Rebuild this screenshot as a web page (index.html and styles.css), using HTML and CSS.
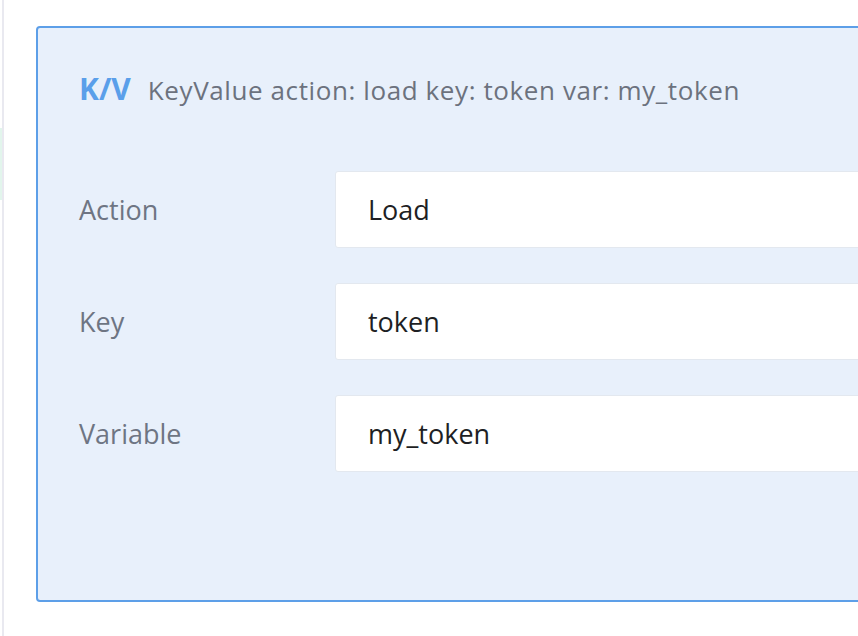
FILE: index.html
```html
<!DOCTYPE html>
<html>
<head>
<meta charset="utf-8">
<link rel="stylesheet" href="styles.css">
</head>
<body>
<div class="page">
  <aside class="sidebar"><div class="active-mark"></div></aside>
  <main class="main">
    <section class="card">
      <header class="card-header">
        <span class="badge">K/V</span>
        <span class="summary">KeyValue action: load key: token var: my_token</span>
      </header>
      <div class="fields">
        <div class="field">
          <label class="field-label">Action</label>
          <div class="field-input">Load</div>
        </div>
        <div class="field">
          <label class="field-label">Key</label>
          <div class="field-input">token</div>
        </div>
        <div class="field">
          <label class="field-label">Variable</label>
          <div class="field-input">my_token</div>
        </div>
      </div>
    </section>
  </main>
</div>
</body>
</html>
```
FILE: styles.css
```css
html, body {
  margin: 0;
  padding: 0;
  background: #ffffff;
}
body {
  font-family: "Open Sans", "Liberation Sans", sans-serif;
  overflow: hidden;
}
.page {
  display: flex;
  height: 636px;
  width: 858px;
  overflow: hidden;
}
.sidebar {
  flex: 0 0 2px;
  border-right: 2px solid #e9e9f0;
  padding-top: 128px;
}
.active-mark {
  width: 2px;
  height: 72px;
  background: #e2f5ec;
}
.main {
  flex: 1 0 auto;
  padding: 26px 0 0 32px;
}
.card {
  box-sizing: border-box;
  width: 900px;
  height: 576px;
  background: #e8f0fb;
  border: 2px solid #5d9fe8;
  border-radius: 4px;
  padding: 46px 0 0 41px;
}
.card-header {
  display: flex;
  align-items: baseline;
  gap: 17px;
  height: 30px;
  line-height: 30px;
}
.badge {
  font-weight: 700;
  font-size: 30px;
  color: #5a9fea;
}
.summary {
  font-size: 26px;
  letter-spacing: 0.6px;
  color: #6c727e;
}
.fields {
  margin-top: 67px;
  display: flex;
  flex-direction: column;
  gap: 35px;
}
.field {
  display: grid;
  grid-template-columns: 256px 1fr;
  align-items: center;
}
.field-label {
  font-size: 27px;
  color: #6e7583;
}
.field-input {
  box-sizing: border-box;
  height: 77px;
  background: #ffffff;
  border: 1px solid #e3e8ef;
  border-radius: 3px;
  padding-left: 32px;
  display: flex;
  align-items: center;
  font-size: 27px;
  color: #1e1f24;
}
```
